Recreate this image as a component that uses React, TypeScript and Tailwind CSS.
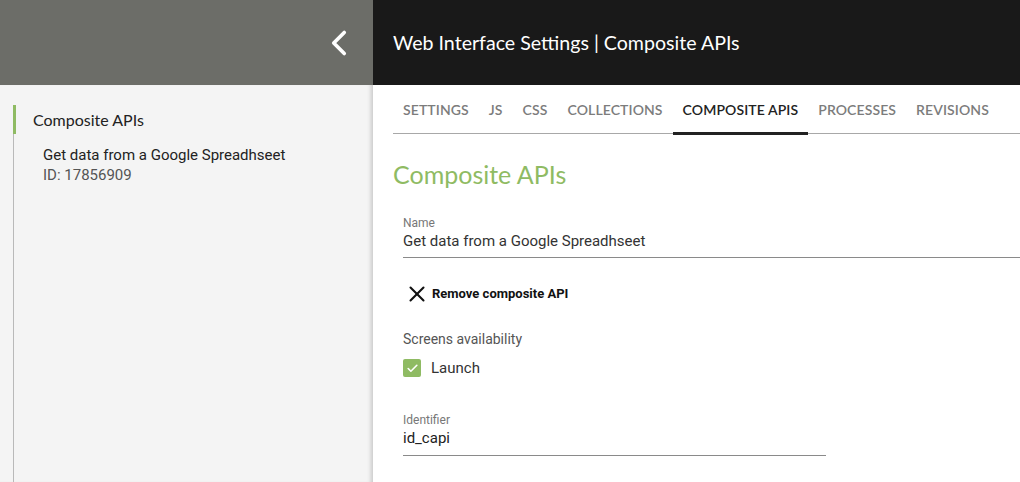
import React from 'react';
import { ChevronLeft, X, Check } from 'lucide-react';

const tabs = ['Settings', 'JS', 'CSS', 'Collections', 'Composite APIs', 'Processes', 'Revisions'];

export default function App() {
    return (
        <div className="flex h-screen w-full overflow-hidden bg-white font-['Roboto',sans-serif]">
            {/* Sidebar */}
            <aside className="flex w-[373px] shrink-0 flex-col">
                <div className="flex h-[85px] items-center justify-end bg-[#6c6d68] pr-[13px]">
                    <ChevronLeft className="h-[42px] w-[42px] text-white" strokeWidth={2.1} />
                </div>
                <div className="flex flex-1 flex-col bg-[#f4f4f4] pt-[20px] shadow-[inset_-5px_0_4px_-3px_rgba(0,0,0,0.18)]">
                    <div className="ml-[13px] flex-1 border-l border-[#b9b9b9]">
                        <div className="relative flex h-[29px] items-center pl-[19px]">
                            <span className="absolute -left-px top-0 h-full w-[3px] bg-[#8fbb63]" />
                            <span className="font-['Lato',sans-serif] text-[16px] text-[#222]">Composite APIs</span>
                        </div>
                        <div className="mt-[11px] pl-[29px] text-[15px] leading-[20px]">
                            <p className="text-[#222]">Get data from a Google Spreadhseet</p>
                            <p className="text-[#555]">ID: 17856909</p>
                        </div>
                    </div>
                </div>
            </aside>

            {/* Main */}
            <main className="flex flex-1 flex-col">
                <div className="flex h-[85px] items-center bg-[#191919] pl-[20px]">
                    <h1 className="font-['Lato',sans-serif] text-[19.6px] text-white">
                        Web Interface Settings | Composite APIs
                    </h1>
                </div>

                <div className="pl-[20px]">
                    <nav className="flex border-b border-[#a8a8a8]">
                        {tabs.map((t) => (
                            <div
                                key={t}
                                className={`relative flex h-[48px] items-center px-[10px] font-['Lato',sans-serif] text-[14px] font-semibold uppercase tracking-[0.1px] ${
                                    t === 'Composite APIs' ? 'text-[#222]' : 'text-[#7c7c7c]'
                                }`}
                            >
                                {t}
                                {t === 'Composite APIs' && (
                                    <span className="absolute -bottom-[2px] left-0 h-[3px] w-full bg-[#222]" />
                                )}
                            </div>
                        ))}
                    </nav>

                    <h2 className="mt-[25px] font-['Lato',sans-serif] text-[25px] leading-[30px] text-[#8fbb63]">
                        Composite APIs
                    </h2>

                    <div className="ml-[10px] mt-[26px]">
                        <label className="block text-[12px] leading-[16px] text-[#777]">Name</label>
                        <div className="border-b border-[#8a8a8a] pb-[6px] text-[15px] leading-[20px] text-[#333]">
                            Get data from a Google Spreadhseet
                        </div>

                        <button className="mt-[23px] flex items-center gap-[2px] pl-[1px] text-[13px] font-bold text-[#111]">
                            <X className="h-[26px] w-[26px]" strokeWidth={1.9} />
                            Remove composite API
                        </button>

                        <p className="mt-[22px] text-[14px] leading-[20px] text-[#555]">Screens availability</p>
                        <div className="mt-[8px] flex items-center gap-[10px]">
                            <span className="flex h-[18px] w-[18px] items-center justify-center rounded-[2px] bg-[#8fbb63]">
                                <Check className="h-[13px] w-[13px] text-white" strokeWidth={3} />
                            </span>
                            <span className="text-[15px] text-[#333]">Launch</span>
                        </div>

                        <div className="mt-[32px] w-[423px]">
                            <label className="block text-[12px] leading-[16px] text-[#777]">Identifier</label>
                            <div className="border-b border-[#8a8a8a] pb-[7px] text-[15px] leading-[20px] text-[#222]">
                                id_capi
                            </div>
                        </div>
                    </div>
                </div>
            </main>
        </div>
    );
}
